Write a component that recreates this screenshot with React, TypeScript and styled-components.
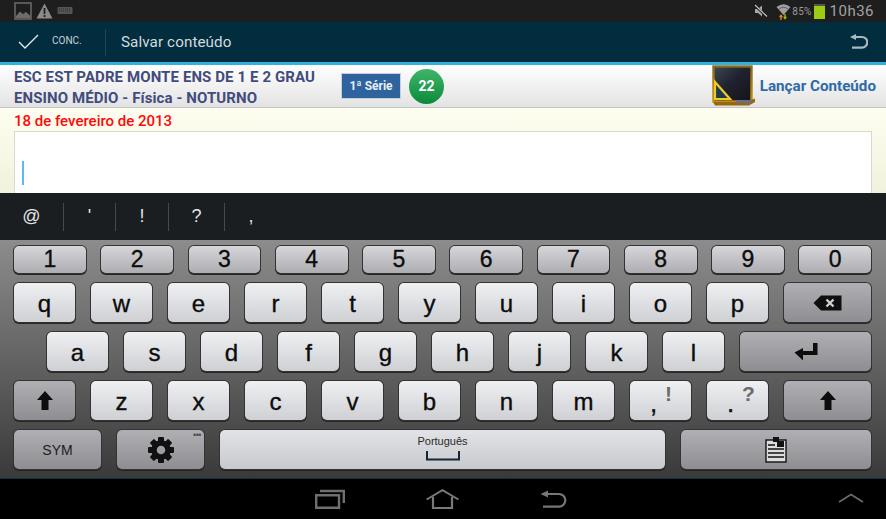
import * as React from "react";
import styled, { createGlobalStyle } from "styled-components";

const GlobalStyle = createGlobalStyle`
  html, body {
    margin: 0;
    padding: 0;
    background: #000;
  }
  body {
    font-family: Roboto, "Liberation Sans", sans-serif;
  }
  * {
    box-sizing: border-box;
  }
`;

const ROW_NUMBERS = ["1", "2", "3", "4", "5", "6", "7", "8", "9", "0"];
const ROW_TOP = ["q", "w", "e", "r", "t", "y", "u", "i", "o", "p"];
const ROW_MIDDLE = ["a", "s", "d", "f", "g", "h", "j", "k", "l"];
const ROW_BOTTOM = ["z", "x", "c", "v", "b", "n", "m"];
const SUGGESTIONS = [
  { label: "@", width: 64 },
  { label: "'", width: 52 },
  { label: "!", width: 53 },
  { label: "?", width: 56 },
  { label: ",", width: 52 },
];

function ShiftIcon() {
  return (
    <svg width="18" height="21" viewBox="0 0 18 21">
      <path d="M9 1 L17 10 H12.5 V20 H5.5 V10 H1 Z" fill="#0c0c0c" />
    </svg>
  );
}

function GearIcon() {
  const teeth = [0, 45, 90, 135, 180, 225, 270, 315];
  return (
    <svg width="28" height="28" viewBox="0 0 28 28">
      {teeth.map((a) => (
        <rect key={a} x="11" y="1" width="6" height="6" rx="1" fill="#111" transform={`rotate(${a} 14 14)`} />
      ))}
      <circle cx="14" cy="14" r="7" fill="none" stroke="#111" strokeWidth="5.5" />
    </svg>
  );
}

export default function App() {
  return (
    <Screen>
      <GlobalStyle />
      <StatusBar>
        <StatusGroup>
          <svg width="18" height="18" viewBox="0 0 18 18">
            <rect x="1" y="1" width="16" height="16" fill="none" stroke="#6c6c6c" strokeWidth="1.5" />
            <path d="M2 14 L6 9.5 L9 12 L12 10 L16 13.5 V16 H2 Z" fill="#6c6c6c" />
          </svg>
          <svg width="17" height="16" viewBox="0 0 17 16">
            <path d="M8.5 0.5 L16.5 15.5 H0.5 Z" fill="#8a8a8a" />
            <rect x="7.6" y="5" width="1.8" height="6" fill="#1e1e1e" />
            <rect x="7.6" y="12" width="1.8" height="2" fill="#1e1e1e" />
          </svg>
          <svg width="16" height="10" viewBox="0 0 16 10">
            <rect x="0.5" y="1" width="15" height="7" rx="1" fill="#555" />
            <path d="M2 3 H14 M2 5 H14" stroke="#222" strokeWidth="0.8" strokeDasharray="1 1" />
          </svg>
        </StatusGroup>
        <StatusGroup>
          <MuteSlot>
            <svg width="14" height="14" viewBox="0 0 14 14">
              <path d="M1 5 H4 L8 1.5 V12.5 L4 9 H1 Z" fill="#a8a8a8" />
              <path d="M0.5 1 L13 13" stroke="#1e1e1e" strokeWidth="2.4" />
              <path d="M1 1 L13 12.5" stroke="#c4c4c4" strokeWidth="1.1" />
            </svg>
          </MuteSlot>
          <WifiSlot>
            <svg width="15" height="17" viewBox="0 0 15 17">
              <path d="M0.5 4 Q7.5 -1.5 14.5 4 L7.5 12 Z" fill="#a0a0a0" />
              <path d="M3 6 Q7.5 2.5 12 6" stroke="#444" strokeWidth="0.7" fill="none" />
              <path d="M5 12.5 V17 M3.6 14 L5 12.3 L6.4 14" stroke="#e08a1e" strokeWidth="1.3" fill="none" />
              <path d="M9 11 V15.5 M7.6 13.8 L9 15.6 L10.4 13.8" stroke="#8fc31f" strokeWidth="1.3" fill="none" />
            </svg>
          </WifiSlot>
          <Percent>85%</Percent>
          <Battery />
          <Clock>10h36</Clock>
        </StatusGroup>
      </StatusBar>

      <ActionBar>
        <DoneGroup>
          <svg width="21" height="15" viewBox="0 0 21 15">
            <path d="M1 8 L7 14 L20 1" fill="none" stroke="#e4e9ec" strokeWidth="1.4" />
          </svg>
          <DoneLabel>CONC.</DoneLabel>
        </DoneGroup>
        <ActionDivider />
        <ActionTitle>Salvar conteúdo</ActionTitle>
        <svg width="19" height="16" viewBox="0 0 19 16">
          <path d="M7 3 H13 A5.2 5.2 0 0 1 13 13.6 H3" fill="none" stroke="#a9bac2" strokeWidth="2.2" />
          <path d="M7 0 V6 L1 3 Z" fill="#a9bac2" />
        </svg>
      </ActionBar>

      <HeaderBand>
        <SchoolInfo>
          <SchoolLine>ESC EST PADRE MONTE ENS DE 1 E 2 GRAU</SchoolLine>
          <SchoolLine>ENSINO MÉDIO - Física - NOTURNO</SchoolLine>
        </SchoolInfo>
        <GradeBadge>1ª Série</GradeBadge>
        <CountCircle>22</CountCircle>
        <LaunchLink>
          <svg width="44" height="42" viewBox="0 0 44 42">
            <defs>
              <linearGradient id="slate" x1="0" y1="0" x2="1" y2="1">
                <stop offset="0" stopColor="#3c4a54" />
                <stop offset="0.45" stopColor="#20222f" />
                <stop offset="1" stopColor="#14131a" />
              </linearGradient>
              <linearGradient id="frame" x1="0" y1="0" x2="0" y2="1">
                <stop offset="0" stopColor="#8a6a1c" />
                <stop offset="1" stopColor="#c08e14" />
              </linearGradient>
            </defs>
            <rect x="1.5" y="1.5" width="38" height="35" fill="url(#slate)" stroke="url(#frame)" strokeWidth="2.4" />
            <path d="M3 17 L18 34 H3 Z" fill="#1d3b55" stroke="#f0cc20" strokeWidth="2.2" />
            <path d="M1 37 H34 L43 33.5 V37 L37 40.5 H3 Z" fill="#94690f" />
            <rect x="24" y="35" width="16" height="3" fill="#6d6d86" />
          </svg>
          <LaunchLabel>Lançar Conteúdo</LaunchLabel>
        </LaunchLink>
      </HeaderBand>

      <ContentArea>
        <DateLine>18 de fevereiro de 2013</DateLine>
        <TextBox>
          <Caret />
        </TextBox>
      </ContentArea>

      <SuggestBar>
        {SUGGESTIONS.map((s, i) => (
          <SuggestItem key={s.label} $width={s.width} $last={i === SUGGESTIONS.length - 1}>
            {s.label}
          </SuggestItem>
        ))}
      </SuggestBar>

      <Keyboard>
        <NumberRow>
          {ROW_NUMBERS.map((k) => (
            <NumberKey key={k}>{k}</NumberKey>
          ))}
        </NumberRow>
        <KeyRow>
          {ROW_TOP.map((k) => (
            <LetterKey key={k}>{k}</LetterKey>
          ))}
          <FuncKey $width={87}>
            <svg width="29" height="16" viewBox="0 0 29 16">
              <path d="M8 0.5 H28.5 V15.5 H8 L0.5 8 Z" fill="#0f0f0f" />
              <path d="M13.5 4.5 L20.5 11.5 M20.5 4.5 L13.5 11.5" stroke="#d0d0d0" strokeWidth="2.4" />
            </svg>
          </FuncKey>
        </KeyRow>
        <MiddleRow>
          {ROW_MIDDLE.map((k) => (
            <LetterKey key={k}>{k}</LetterKey>
          ))}
          <FuncKey $width={131}>
            <svg width="24" height="20" viewBox="0 0 24 20">
              <path d="M19 1 H23.5 V13 H9 V18.5 L0.5 10.5 L9 6 V9 H19 Z" fill="#0d0d0d" />
            </svg>
          </FuncKey>
        </MiddleRow>
        <KeyRow>
          <FuncKey $width={61}>
            <ShiftIcon />
          </FuncKey>
          {ROW_BOTTOM.map((k) => (
            <LetterKey key={k}>{k}</LetterKey>
          ))}
          <LetterKey>
            <PunctMain>,</PunctMain>
            <PunctHint>!</PunctHint>
          </LetterKey>
          <LetterKey>
            <PunctMain>.</PunctMain>
            <PunctHint>?</PunctHint>
          </LetterKey>
          <FuncKey $width={87}>
            <ShiftIcon />
          </FuncKey>
        </KeyRow>
        <KeyRow>
          <FuncKey $width={87}>
            <SymLabel>SYM</SymLabel>
          </FuncKey>
          <FuncKey $width={87}>
            <GearIcon />
            <MoreDots>•••</MoreDots>
          </FuncKey>
          <SpaceKey>
            <SpaceLabel>Português</SpaceLabel>
            <svg width="34" height="10" viewBox="0 0 34 10">
              <path d="M1 0 V8.5 H33 V0" fill="none" stroke="#13263a" strokeWidth="2" />
            </svg>
          </SpaceKey>
          <FuncKey $width={190}>
            <svg width="22" height="27" viewBox="0 0 22 27">
              <rect x="1" y="4" width="20" height="22" fill="#dcdcdc" stroke="#111" strokeWidth="1.4" />
              <rect x="8" y="1" width="6" height="5" fill="#111" />
              <rect x="12" y="5" width="7" height="6" fill="#111" />
              <path d="M3 9 H10 M3 13 H19 M3 17 H19 M3 21 H19" stroke="#111" strokeWidth="1.4" />
            </svg>
          </FuncKey>
        </KeyRow>
      </Keyboard>

      <NavBar>
        <NavCenter>
          <svg width="30" height="20" viewBox="0 0 30 20">
            <path d="M1.2 6.2 H24 V18.8 H1.2 Z" fill="none" stroke="#6f6f6f" strokeWidth="2.4" />
            <path d="M5 2 H28.8 V14" fill="none" stroke="#6f6f6f" strokeWidth="2.4" />
          </svg>
          <svg width="33" height="20" viewBox="0 0 33 20">
            <path d="M0.6 10.5 L16.5 1.2 L32.4 10.5" fill="none" stroke="#7a7a7a" strokeWidth="2" />
            <path d="M7 8 V19 H26 V8" fill="none" stroke="#7a7a7a" strokeWidth="2.2" />
          </svg>
          <svg width="27" height="18" viewBox="0 0 27 18">
            <path d="M8 4 H19 A6.2 6.2 0 0 1 19 16.6 H3" fill="none" stroke="#777" strokeWidth="2.2" />
            <path d="M8 0.4 V7.6 L0.5 4 Z" fill="#777" />
          </svg>
        </NavCenter>
        <NavChevron>
          <svg width="26" height="10" viewBox="0 0 26 10">
            <path d="M1 9 L13 1.5 L25 9" fill="none" stroke="#6b6b6b" strokeWidth="1.6" />
          </svg>
        </NavChevron>
      </NavBar>
    </Screen>
  );
}

const Screen = styled.div`
  width: 886px;
  height: 519px;
  display: flex;
  flex-direction: column;
  overflow: hidden;
  background: #000;
`;

const StatusBar = styled.div`
  height: 22px;
  background: #1e1e1e;
  display: flex;
  align-items: center;
  justify-content: space-between;
  padding: 0 12px 0 14px;
`;

const StatusGroup = styled.div`
  display: flex;
  align-items: center;
  gap: 4px;
`;

const MuteSlot = styled.span`
  display: flex;
  margin-right: 4px;
`;

const WifiSlot = styled.span`
  display: flex;
  margin-right: -3px;
`;

const Percent = styled.span`
  font-size: 10px;
  color: #9a9a9a;
  letter-spacing: 0.2px;
`;

const Battery = styled.span`
  display: block;
  width: 11px;
  height: 15px;
  margin-left: -2px;
  background: #9ccb12;
  border-top: 2px solid #555;
`;

const Clock = styled.span`
  font-size: 15px;
  color: #a2a2a2;
  letter-spacing: 0.5px;
  margin-left: 1px;
`;

const ActionBar = styled.div`
  height: 43px;
  background: #012d3f;
  border-bottom: 3px solid #35b0de;
  display: flex;
  align-items: center;
  padding-right: 18px;
`;

const DoneGroup = styled.div`
  width: 105px;
  display: flex;
  align-items: center;
  gap: 13px;
  padding: 0 0 1px 18px;
`;

const DoneLabel = styled.span`
  font-size: 10px;
  color: #c9d3d8;
  margin-bottom: 2px;
`;

const ActionDivider = styled.span`
  width: 1px;
  height: 27px;
  background: #1d4656;
`;

const ActionTitle = styled.span`
  flex: 1;
  margin: 0 0 1px 15px;
  font-size: 15.2px;
  color: #d3dadd;
  letter-spacing: 0.1px;
`;

const HeaderBand = styled.div`
  height: 43px;
  display: flex;
  align-items: center;
  padding: 0 10px 0 14px;
  background: linear-gradient(#ffffff, #e3e3e3);
  border-bottom: 1px solid #c4c4c4;
`;

const SchoolInfo = styled.div`
  width: 327px;
  display: flex;
  flex-direction: column;
  gap: 3px;
  margin-top: 2px;
`;

const SchoolLine = styled.div`
  font-size: 15px;
  line-height: 18px;
  font-weight: 700;
  color: #424b7c;
  white-space: nowrap;
  letter-spacing: 0.1px;
`;

const GradeBadge = styled.div`
  width: 60px;
  height: 26px;
  display: flex;
  align-items: center;
  justify-content: center;
  background: #2f639e;
  border: 1px solid #c6d0dc;
  color: #e8eef5;
  font-size: 12px;
  font-weight: 700;
`;

const CountCircle = styled.div`
  width: 35px;
  height: 35px;
  margin-left: 8px;
  border-radius: 50%;
  display: flex;
  align-items: center;
  justify-content: center;
  background: linear-gradient(#3eb56a, #0b8a3a);
  color: #fff;
  font-size: 14px;
  font-weight: 700;
`;

const LaunchLink = styled.div`
  margin-left: auto;
  display: flex;
  align-items: center;
  gap: 4px;
`;

const LaunchLabel = styled.span`
  font-size: 15.2px;
  font-weight: 700;
  color: #2f6aa8;
  white-space: nowrap;
`;

const ContentArea = styled.div`
  height: 85px;
  background: linear-gradient(#fdfef0, #f1f2dc);
  padding: 4px 14px 0;
  display: flex;
  flex-direction: column;
`;

const DateLine = styled.div`
  height: 19px;
  font-size: 15px;
  line-height: 18px;
  font-weight: 500;
  color: #ff0a0a;
`;

const TextBox = styled.div`
  flex: 1;
  background: #fff;
  border: 1px solid #d8d8cc;
  border-bottom: none;
  display: flex;
  align-items: flex-end;
  padding: 0 0 8px 7px;
`;

const Caret = styled.span`
  display: block;
  width: 2px;
  height: 24px;
  background: #5cb8f0;
`;

const SuggestBar = styled.div`
  height: 47px;
  background: #1a1e21;
  display: flex;
  align-items: center;
`;

const SuggestItem = styled.div<{ $width: number; $last?: boolean }>`
  width: ${(p) => p.$width}px;
  height: 28px;
  display: flex;
  align-items: center;
  justify-content: center;
  color: #e4e4e4;
  font-size: 18px;
  font-family: "Liberation Sans", sans-serif;
  border-right: ${(p) => (p.$last ? "none" : "1px solid #454a4e")};
`;

const Keyboard = styled.div`
  height: 239px;
  padding: 6px 15px 0 14px;
  background: linear-gradient(#8c8c8c, #3a3a3a);
  border-bottom: 1px solid #0e3444;
  display: flex;
  flex-direction: column;
  gap: 10px;
  font-family: "Liberation Sans", sans-serif;
`;

const KeyRow = styled.div`
  height: 39px;
  display: flex;
  gap: 16px;
`;

const NumberRow = styled.div`
  height: 27px;
  display: flex;
  gap: 15.5px;
`;

const MiddleRow = styled(KeyRow)`
  padding-left: 33px;
`;

const KeyBase = styled.div`
  position: relative;
  display: flex;
  align-items: center;
  justify-content: center;
  border-radius: 5px;
  color: #0c0c0c;
  -webkit-text-stroke: 0.35px #0c0c0c;
  box-shadow: 0 0 0 1px #333, 0 1px 0 1px #262626;
`;

const NumberKey = styled(KeyBase)`
  flex: 1;
  font-size: 23px;
  background: linear-gradient(#d6d6da, #aeaeb2);
`;

const LetterKey = styled(KeyBase)`
  width: 61px;
  font-size: 24px;
  padding-top: 2px;
  background: linear-gradient(#eff0f2, #cfd0d4);
`;

const FuncKey = styled(KeyBase)<{ $width: number }>`
  width: ${(p) => p.$width}px;
  background: linear-gradient(#b0afb3, #8e8d91);
`;

const SpaceKey = styled(KeyBase)`
  flex: 1;
  flex-direction: column;
  justify-content: flex-start;
  padding-top: 4px;
  background: linear-gradient(#e2e3e6, #c8c9cd);
  -webkit-text-stroke: 0;
`;

const SpaceLabel = styled.span`
  font-size: 11px;
  line-height: 14px;
  color: #2a2a2a;
  margin-bottom: 3px;
`;

const SymLabel = styled.span`
  font-size: 14px;
  color: #1c1c1c;
  -webkit-text-stroke: 0;
`;

const PunctMain = styled.span`
  font-size: 26px;
  line-height: 26px;
  margin: 2px 14px 0 0;
`;

const PunctHint = styled.span`
  position: absolute;
  top: 1px;
  left: 35px;
  font-size: 21px;
  font-weight: 700;
  color: #6c6c6c;
  -webkit-text-stroke: 0;
`;

const MoreDots = styled.span`
  position: absolute;
  top: 1px;
  right: 3px;
  font-size: 9px;
  line-height: 9px;
  letter-spacing: -0.5px;
  color: #4c4c4c;
  -webkit-text-stroke: 0;
`;

const NavBar = styled.div`
  position: relative;
  height: 40px;
  background: #000;
  display: flex;
  align-items: center;
  justify-content: center;
`;

const NavCenter = styled.div`
  display: flex;
  align-items: center;
  gap: 81px;
  margin-right: 4px;
`;

const NavChevron = styled.div`
  position: absolute;
  right: 22px;
  top: 14px;
  display: flex;
`;
